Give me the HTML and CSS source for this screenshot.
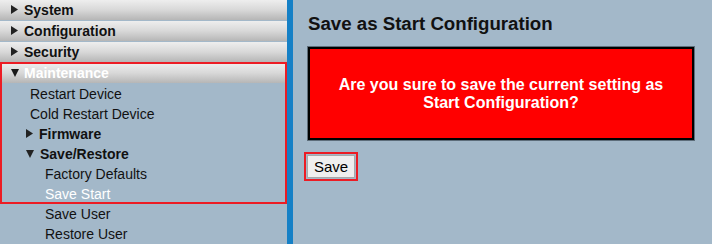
FILE: index.html
```html
<!DOCTYPE html>
<html>
<head>
<meta charset="utf-8">
<link rel="stylesheet" href="styles.css">
</head>
<body>
<div class="page">
  <nav class="sidebar">
    <div class="bar"><svg class="tri" width="7" height="9" viewBox="0 0 7 9"><path d="M0 0 L7 4.5 L0 9 Z"/></svg><span>System</span></div>
    <div class="bar"><svg class="tri" width="7" height="9" viewBox="0 0 7 9"><path d="M0 0 L7 4.5 L0 9 Z"/></svg><span>Configuration</span></div>
    <div class="bar"><svg class="tri" width="7" height="9" viewBox="0 0 7 9"><path d="M0 0 L7 4.5 L0 9 Z"/></svg><span>Security</span></div>
    <div class="group">
      <div class="bar open"><svg class="tri" width="8" height="8" viewBox="0 0 8 8"><path d="M0 0 L8 0 L4 8 Z"/></svg><span>Maintenance</span></div>
      <div class="item l1">Restart Device</div>
      <div class="item l1">Cold Restart Device</div>
      <div class="item sub"><svg class="tri" width="7" height="9" viewBox="0 0 7 9"><path d="M0 0 L7 4.5 L0 9 Z"/></svg><span>Firmware</span></div>
      <div class="item sub"><svg class="tri" width="8" height="8" viewBox="0 0 8 8"><path d="M0 0 L8 0 L4 8 Z"/></svg><span>Save/Restore</span></div>
      <div class="item l2">Factory Defaults</div>
      <div class="item l2 active">Save Start</div>
    </div>
    <div class="item l2">Save User</div>
    <div class="item l2">Restore User</div>
  </nav>
  <div class="divider"></div>
  <main class="content">
    <h1 class="title">Save as Start Configuration</h1>
    <div class="warning">
      <p>Are you sure to save the current setting as<br>Start Configuration?</p>
    </div>
    <div class="btn-wrap"><button class="btn">Save</button></div>
  </main>
</div>
</body>
</html>
```
FILE: styles.css
```css
html, body {
  margin: 0;
  padding: 0;
  background: #a3b8c9;
  font-family: "Liberation Sans", Arial, sans-serif;
}
.page {
  display: flex;
  height: 244px;
  overflow: hidden;
}
.sidebar {
  width: 287px;
  flex: none;
  display: flex;
  flex-direction: column;
}
.bar {
  height: 20px;
  line-height: 19px;
  margin-bottom: 1px;
  background: linear-gradient(to bottom, #eeeeee 0%, #d8d8d8 50%, #b6b6b6 100%);
  font-weight: bold;
  font-size: 14px;
  color: #111;
  padding-left: 11px;
  display: flex;
  align-items: center;
}
.bar span { line-height: 19px; }
.tri {
  fill: #222;
  flex: none;
  margin-right: 6px;
  margin-top: -1px;
}
.bar.open { color: #fff; }
.bar.open .tri { margin-right: 5px; fill: #1a1a1a; }
.group {
  position: relative;
}
.group::after {
  content: "";
  position: absolute;
  top: -1px;
  left: 0;
  right: 0;
  bottom: 0;
  border: 2px solid #ec1c24;
  pointer-events: none;
}
.item {
  height: 20px;
  line-height: 20px;
  font-size: 14px;
  color: #111;
  display: flex;
  align-items: center;
}
.item.l1 { padding-left: 30px; }
.item.l2 { padding-left: 45px; }
.item.sub { padding-left: 26px; font-weight: bold; }
.item.sub .tri { margin-right: 6px; }
.item.active { color: #fff; }
.divider {
  width: 6px;
  flex: none;
  background: #1580c6;
}
.content {
  flex: 1;
  padding: 13px 0 0 11px;
}
.title {
  margin: 0 0 12px 4px;
  font-size: 18.67px;
  line-height: 22px;
  font-weight: bold;
  color: #111;
}
.warning {
  margin-left: 4px;
  width: 386px;
  height: 93px;
  box-sizing: border-box;
  background: #ff0000;
  border: 2px solid #000;
  box-shadow: 0 0 0 1px #5d6d7a;
  display: flex;
  align-items: center;
  justify-content: center;
}
.warning p {
  margin: 0;
  text-align: center;
  color: #fff;
  font-weight: bold;
  font-size: 16px;
  line-height: 18px;
}
.btn-wrap {
  display: inline-block;
  margin-top: 12px;
  border: 2px solid #ec1c24;
  padding: 1px;
}
.btn {
  display: block;
  font-family: "Liberation Sans", Arial, sans-serif;
  font-size: 15px;
  line-height: 17px;
  color: #000;
  background: #efefef;
  border: 1px solid #a9a9a9;
  padding: 2px 6px;
  margin: 0;
}
```
